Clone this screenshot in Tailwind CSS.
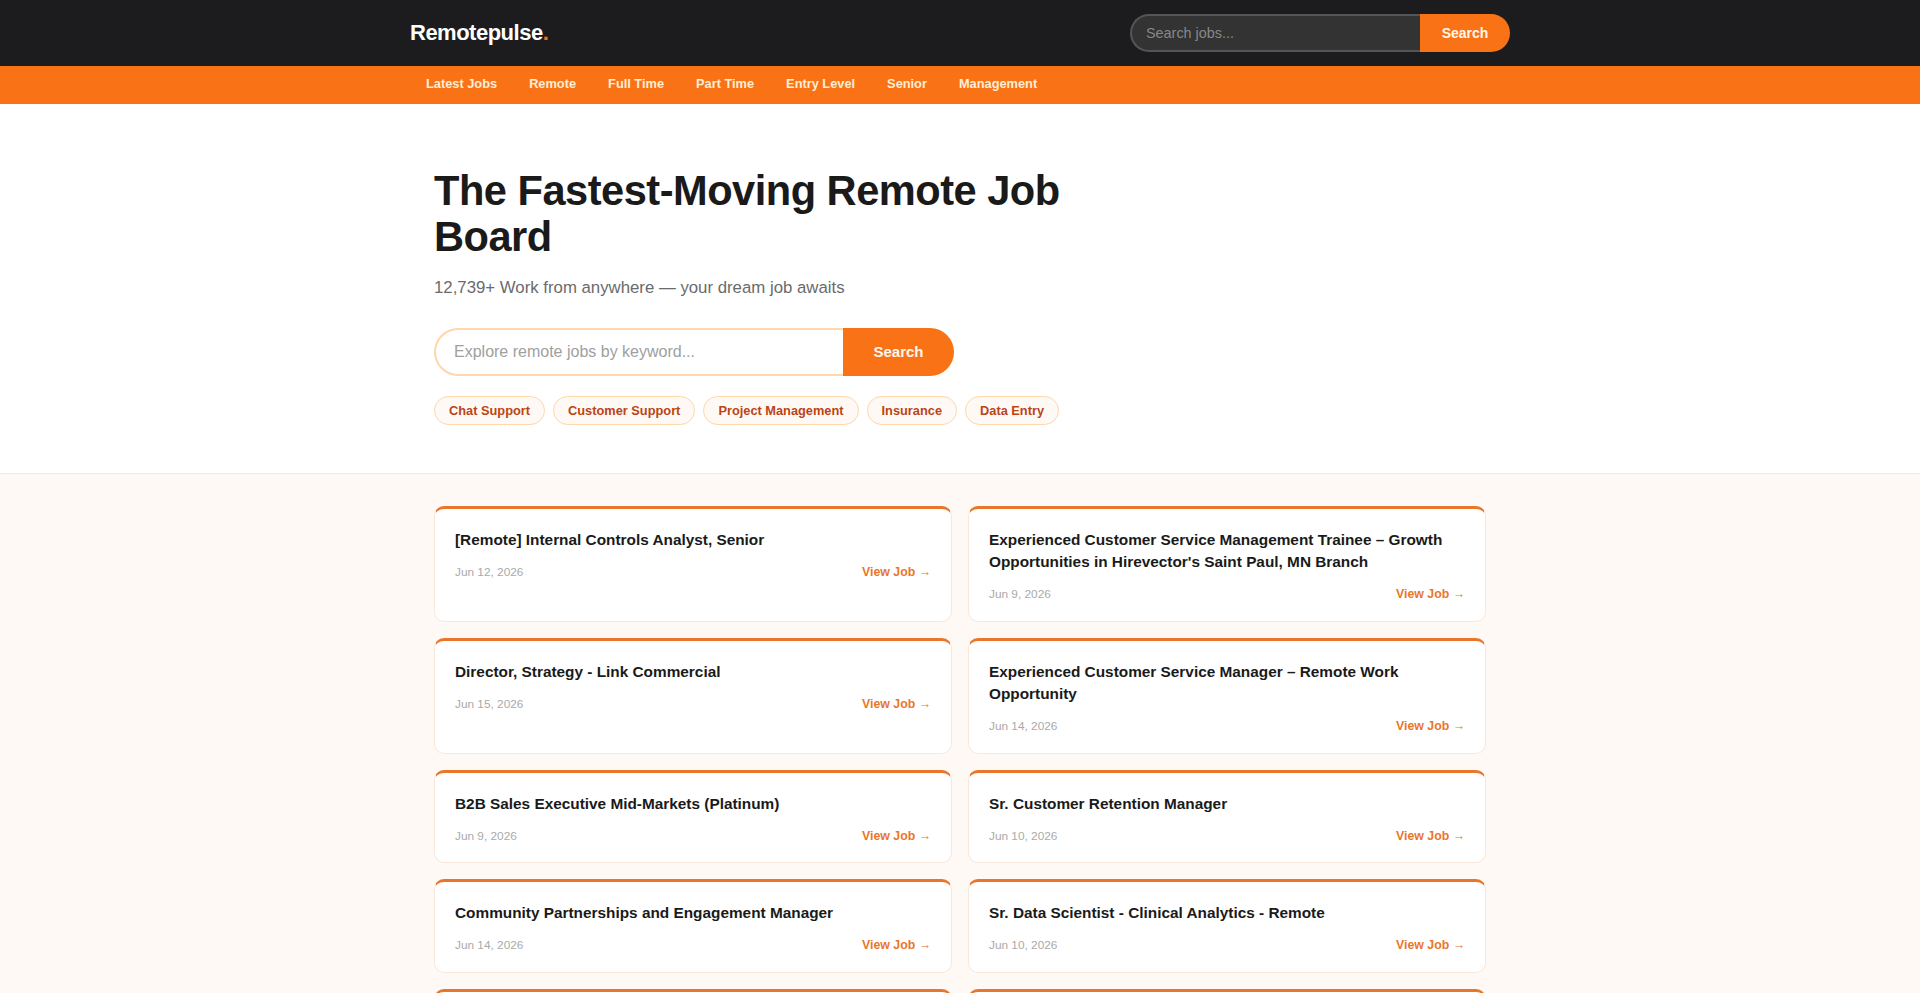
<!DOCTYPE html>
<html lang="en">
<head>
    <meta charset="UTF-8">
    <meta name="viewport" content="width=device-width, initial-scale=1.0">
    <title>Remotepulse</title>
    <script src="https://cdn.jsdelivr.net/npm/@tailwindcss/browser@4"></script>
</head>
<body class="bg-[#fff9f5] font-['Liberation_Sans',Arial,sans-serif] text-[#1a1a1a]">
    <header class="bg-[#1c1c1e] h-[66px]">
        <div class="max-w-[1100px] h-full mx-auto flex items-center justify-between">
            <a href="#" class="text-[22px] leading-[25px] mb-[2px] font-bold tracking-[-0.5px] text-white">Remotepulse<span class="text-[#f97316]">.</span></a>
            <form class="flex h-[38px] w-[380px]">
                <input class="w-[290px] h-full bg-[#333] border-2 border-r-0 border-[#555] rounded-l-full px-[14px] text-[14.4px] text-white placeholder:text-[#888] outline-none" type="text" placeholder="Search jobs...">
                <button class="w-[90px] h-full bg-[#f97316] text-[#fff7ed] text-sm font-bold rounded-r-full" type="button">Search</button>
            </form>
        </div>
    </header>

    <nav class="bg-[#f97316] h-[38px]">
        <div class="max-w-[1100px] mx-auto flex pt-[9px]">
            <a href="#" class="px-4 text-[12.8px] leading-[18px] font-semibold text-[#ffedd5]">Latest Jobs</a>
            <a href="#" class="px-4 text-[12.8px] leading-[18px] font-semibold text-[#ffedd5]">Remote</a>
            <a href="#" class="px-4 text-[12.8px] leading-[18px] font-semibold text-[#ffedd5]">Full Time</a>
            <a href="#" class="px-4 text-[12.8px] leading-[18px] font-semibold text-[#ffedd5]">Part Time</a>
            <a href="#" class="px-4 text-[12.8px] leading-[18px] font-semibold text-[#ffedd5]">Entry Level</a>
            <a href="#" class="px-4 text-[12.8px] leading-[18px] font-semibold text-[#ffedd5]">Senior</a>
            <a href="#" class="px-4 text-[12.8px] leading-[18px] font-semibold text-[#ffedd5]">Management</a>
        </div>
    </nav>

    <section class="bg-white border-b border-[#f5e8df] pt-16 pb-12">
        <div class="max-w-[1100px] mx-auto px-6">
            <h1 class="max-w-[680px] text-[41.6px] leading-[45.76px] font-bold tracking-[-0.5px] text-[#1a1a1a]">The Fastest-Moving Remote Job Board</h1>
            <p class="mt-[15px] text-[16.8px] leading-[26px] text-[#6b6b6b]">12,739+ Work from anywhere — your dream job awaits</p>
            <form class="mt-[27.5px] flex h-[48px] w-[520px]">
                <input class="flex-1 min-w-0 h-full bg-white border-2 border-r-0 border-[#fed7aa] rounded-l-full px-[18px] text-base text-[#1a1a1a] placeholder:text-[#a0a0a0] outline-none" type="text" placeholder="Explore remote jobs by keyword...">
                <button class="w-[111px] h-full bg-[#f97316] text-[#fff7ed] text-[15px] font-bold rounded-r-full" type="button">Search</button>
            </form>
            <div class="mt-5 flex gap-2">
                <a href="#" class="h-[29px] flex items-center px-[14px] bg-[#fff9f5] border border-[#fed7aa] rounded-full text-[12.8px] font-semibold text-[#bb4415]">Chat Support</a>
                <a href="#" class="h-[29px] flex items-center px-[14px] bg-[#fff9f5] border border-[#fed7aa] rounded-full text-[12.8px] font-semibold text-[#bb4415]">Customer Support</a>
                <a href="#" class="h-[29px] flex items-center px-[14px] bg-[#fff9f5] border border-[#fed7aa] rounded-full text-[12.8px] font-semibold text-[#bb4415]">Project Management</a>
                <a href="#" class="h-[29px] flex items-center px-[14px] bg-[#fff9f5] border border-[#fed7aa] rounded-full text-[12.8px] font-semibold text-[#bb4415]">Insurance</a>
                <a href="#" class="h-[29px] flex items-center px-[14px] bg-[#fff9f5] border border-[#fed7aa] rounded-full text-[12.8px] font-semibold text-[#bb4415]">Data Entry</a>
            </div>
        </div>
    </section>

    <main class="max-w-[1100px] mx-auto px-6 pt-8 pb-8">
        <div class="grid grid-cols-2 gap-4">
            <article class="bg-white border border-[#f8e8dc] border-t-[3px] border-t-[#ea762b] rounded-[10px] pt-5 px-5 pb-5">
                <h2 class="text-[15.36px] leading-[22px] font-bold text-[#1a1a1a]">[Remote] Internal Controls Analyst, Senior</h2>
                <div class="mt-3 flex items-baseline justify-between h-[15.75px]">
                    <span class="text-[11.84px] text-[#aaa]">Jun 12, 2026</span>
                    <a href="#" class="text-[12.32px] font-bold text-[#ea762b]">View Job →</a>
                </div>
            </article>
            <article class="bg-white border border-[#f8e8dc] border-t-[3px] border-t-[#ea762b] rounded-[10px] pt-5 px-5 pb-5">
                <h2 class="text-[15.36px] leading-[22px] font-bold text-[#1a1a1a]">Experienced Customer Service Management Trainee – Growth Opportunities in Hirevector's Saint Paul, MN Branch</h2>
                <div class="mt-3 flex items-baseline justify-between h-[15.75px]">
                    <span class="text-[11.84px] text-[#aaa]">Jun 9, 2026</span>
                    <a href="#" class="text-[12.32px] font-bold text-[#ea762b]">View Job →</a>
                </div>
            </article>
            <article class="bg-white border border-[#f8e8dc] border-t-[3px] border-t-[#ea762b] rounded-[10px] pt-5 px-5 pb-5">
                <h2 class="text-[15.36px] leading-[22px] font-bold text-[#1a1a1a]">Director, Strategy - Link Commercial</h2>
                <div class="mt-3 flex items-baseline justify-between h-[15.75px]">
                    <span class="text-[11.84px] text-[#aaa]">Jun 15, 2026</span>
                    <a href="#" class="text-[12.32px] font-bold text-[#ea762b]">View Job →</a>
                </div>
            </article>
            <article class="bg-white border border-[#f8e8dc] border-t-[3px] border-t-[#ea762b] rounded-[10px] pt-5 px-5 pb-5">
                <h2 class="text-[15.36px] leading-[22px] font-bold text-[#1a1a1a]">Experienced Customer Service Manager – Remote Work Opportunity</h2>
                <div class="mt-3 flex items-baseline justify-between h-[15.75px]">
                    <span class="text-[11.84px] text-[#aaa]">Jun 14, 2026</span>
                    <a href="#" class="text-[12.32px] font-bold text-[#ea762b]">View Job →</a>
                </div>
            </article>
            <article class="bg-white border border-[#f8e8dc] border-t-[3px] border-t-[#ea762b] rounded-[10px] pt-5 px-5 pb-5">
                <h2 class="text-[15.36px] leading-[22px] font-bold text-[#1a1a1a]">B2B Sales Executive Mid-Markets (Platinum)</h2>
                <div class="mt-3 flex items-baseline justify-between h-[15.75px]">
                    <span class="text-[11.84px] text-[#aaa]">Jun 9, 2026</span>
                    <a href="#" class="text-[12.32px] font-bold text-[#ea762b]">View Job →</a>
                </div>
            </article>
            <article class="bg-white border border-[#f8e8dc] border-t-[3px] border-t-[#ea762b] rounded-[10px] pt-5 px-5 pb-5">
                <h2 class="text-[15.36px] leading-[22px] font-bold text-[#1a1a1a]">Sr. Customer Retention Manager</h2>
                <div class="mt-3 flex items-baseline justify-between h-[15.75px]">
                    <span class="text-[11.84px] text-[#aaa]">Jun 10, 2026</span>
                    <a href="#" class="text-[12.32px] font-bold text-[#ea762b]">View Job →</a>
                </div>
            </article>
            <article class="bg-white border border-[#f8e8dc] border-t-[3px] border-t-[#ea762b] rounded-[10px] pt-5 px-5 pb-5">
                <h2 class="text-[15.36px] leading-[22px] font-bold text-[#1a1a1a]">Community Partnerships and Engagement Manager</h2>
                <div class="mt-3 flex items-baseline justify-between h-[15.75px]">
                    <span class="text-[11.84px] text-[#aaa]">Jun 14, 2026</span>
                    <a href="#" class="text-[12.32px] font-bold text-[#ea762b]">View Job →</a>
                </div>
            </article>
            <article class="bg-white border border-[#f8e8dc] border-t-[3px] border-t-[#ea762b] rounded-[10px] pt-5 px-5 pb-5">
                <h2 class="text-[15.36px] leading-[22px] font-bold text-[#1a1a1a]">Sr. Data Scientist - Clinical Analytics - Remote</h2>
                <div class="mt-3 flex items-baseline justify-between h-[15.75px]">
                    <span class="text-[11.84px] text-[#aaa]">Jun 10, 2026</span>
                    <a href="#" class="text-[12.32px] font-bold text-[#ea762b]">View Job →</a>
                </div>
            </article>
            <!-- next row is cut off by the window, only the top edge shows -->
            <article class="h-[94px] bg-white border border-[#f8e8dc] border-t-[3px] border-t-[#ea762b] rounded-[10px]"></article>
            <article class="h-[94px] bg-white border border-[#f8e8dc] border-t-[3px] border-t-[#ea762b] rounded-[10px]"></article>
        </div>
    </main>
</body>
</html>
